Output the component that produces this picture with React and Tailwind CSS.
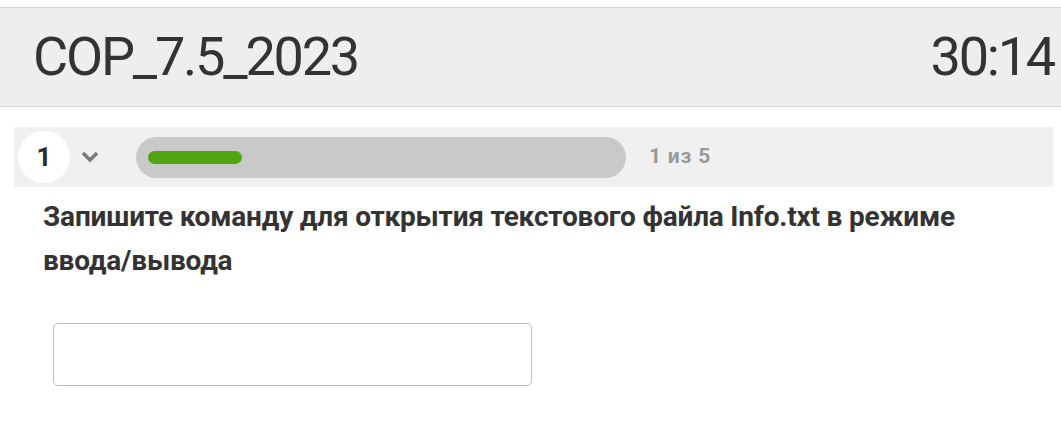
import React from "react";

export default function App() {
  return (
    <div className="w-[1061px] h-[421px] bg-white overflow-hidden" style={{ fontFamily: "Roboto, 'Noto Sans', sans-serif" }}>
      <div className="h-[7px] bg-white" />
      <div className="h-[100px] bg-[#eeeeee] border-y border-[#d4d4d4] flex items-center justify-between pl-[33px] pr-[7px]">
        <div className="text-[54px] leading-none text-[#333333] tracking-[-2.2px]">COP_7.5_2023</div>
        <div className="text-[54px] leading-none text-[#333333] tracking-[-2.2px]">30:14</div>
      </div>
      <div className="mt-[20px] ml-[14px] w-[1039px] h-[60px] bg-[#f0f0f0] flex items-center">
        <div className="ml-[4px] w-[52px] h-[52px] rounded-full bg-white flex items-center justify-center text-[26px] font-bold text-[#2a2a2a]">1</div>
        <svg className="ml-[10px]" width="20" height="14" viewBox="0 0 20 14">
          <path d="M3 3 L10 10 L17 3" fill="none" stroke="#7a7a7a" strokeWidth="3.5" />
        </svg>
        <div className="ml-[36px] w-[490px] h-[41px] rounded-full bg-[#c9c9c9] flex items-center px-[12px]">
          <div className="w-[94px] h-[13px] rounded-full bg-[#52a512]" />
        </div>
        <div className="ml-[23px] text-[21px] font-bold text-[#9a9a9a] tracking-[0.8px]">1 из 5</div>
      </div>
      <div className="pl-[43px] pt-[8px] text-[28px] leading-[44px] font-bold text-[#333333] tracking-[-0.2px] w-[1000px]">
        Запишите команду для открытия текстового файла Info.txt в режиме ввода/вывода
      </div>
      <div className="ml-[53px] mt-[40px] w-[479px] h-[63px] border border-[#bdbdbd] rounded-[5px] bg-white" />
    </div>
  );
}
